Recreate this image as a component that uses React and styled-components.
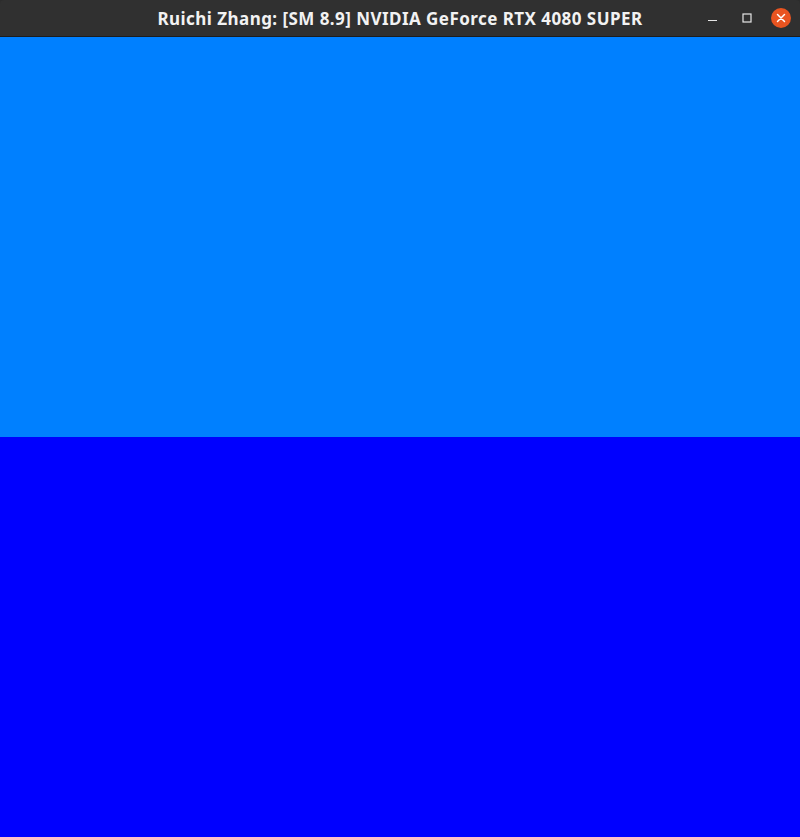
import React from "react";
import styled, { createGlobalStyle } from "styled-components";

const GlobalStyle = createGlobalStyle`
  html, body {
    margin: 0;
    padding: 0;
    background: #2c2c2c;
  }
`;

const Window = styled.div`
  display: flex;
  flex-direction: column;
  width: 800px;
  height: 837px;
  overflow: hidden;
`;

const TitleBar = styled.header`
  position: relative;
  display: flex;
  align-items: center;
  justify-content: center;
  height: 36px;
  flex-shrink: 0;
  background-color: #303030;
  border-bottom: 1px solid #1d1d1d;
  border-radius: 4px 4px 0 0;
`;

const Title = styled.h1`
  margin: 0;
  font-family: "Noto Sans", "DejaVu Sans", sans-serif;
  font-weight: 700;
  font-size: 17px;
  letter-spacing: 0.45px;
  color: #f2f2f2;
`;

const Controls = styled.div`
  position: absolute;
  top: 0;
  right: 0;
  height: 100%;
  display: flex;
  align-items: center;
  gap: 14px;
  padding-right: 9px;
`;

const ControlButton = styled.div`
  width: 20px;
  height: 20px;
  display: flex;
  align-items: center;
  justify-content: center;
  border-radius: 50%;
  background-color: ${(p) => (p.close ? "#e95420" : "transparent")};
`;

const Canvas = styled.main`
  flex: 1;
  display: flex;
  flex-direction: column;
`;

const Band = styled.div`
  flex: 1;
  background-color: ${(p) => p.color};
`;

function App() {
  return (
    <Window>
      <GlobalStyle />
      <TitleBar>
        <Title>Ruichi Zhang: [SM 8.9] NVIDIA GeForce RTX 4080 SUPER</Title>
        <Controls>
          <ControlButton>
            <svg width="10" height="10" viewBox="0 0 10 10">
              <rect x="0" y="7" width="9" height="1" fill="#e6e6e6" />
            </svg>
          </ControlButton>
          <ControlButton>
            <svg width="10" height="10" viewBox="0 0 10 10">
              <rect x="1" y="1" width="8" height="8" fill="none" stroke="#e6e6e6" strokeWidth="1.2" />
            </svg>
          </ControlButton>
          <ControlButton close>
            <svg width="10" height="10" viewBox="0 0 10 10">
              <path d="M1.5 1.5 L8.5 8.5 M8.5 1.5 L1.5 8.5" stroke="#fff" strokeWidth="1.5" strokeLinecap="round" />
            </svg>
          </ControlButton>
        </Controls>
      </TitleBar>
      <Canvas>
        <Band color="#0080ff" />
        <Band color="#0000ff" />
      </Canvas>
    </Window>
  );
}

export default App;
